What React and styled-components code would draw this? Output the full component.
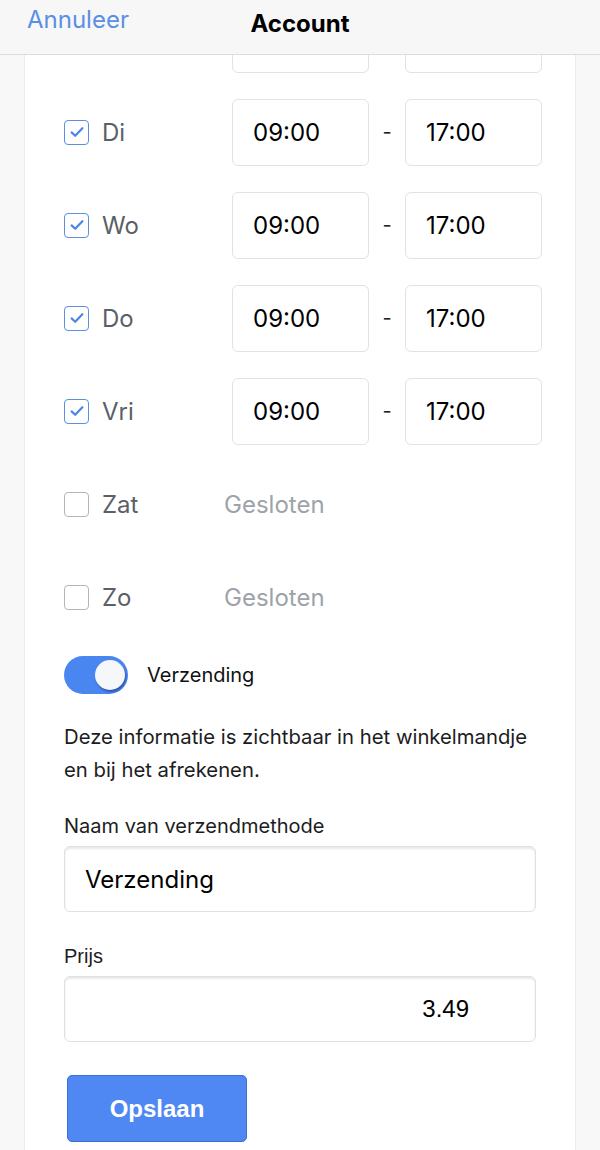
import React, { useState } from "react";
import styled, { createGlobalStyle } from "styled-components";

const GlobalStyle = createGlobalStyle`
  html, body {
    margin: 0;
    padding: 0;
    background: #f8f8f9;
    font-family: Inter, "Liberation Sans", sans-serif;
  }
  * { box-sizing: border-box; }
`;

const days = [
  { name: "Ma", open: true },
  { name: "Di", open: true },
  { name: "Wo", open: true },
  { name: "Do", open: true },
  { name: "Vri", open: true },
  { name: "Zat", open: false },
  { name: "Zo", open: false },
];

function Check({ checked }) {
  return (
    <Box checked={checked}>
      {checked && (
        <svg width="18" height="18" viewBox="0 0 18 18">
          <path
            d="M3.6 9.4 L7.2 12.8 L14.4 5.2"
            fill="none"
            stroke="#4a86e8"
            strokeWidth="2.2"
            strokeLinecap="round"
            strokeLinejoin="round"
          />
        </svg>
      )}
    </Box>
  );
}

function App() {
  const [shipping, setShipping] = useState(true);
  return (
    <>
      <GlobalStyle />
      <Header>
        <Cancel>Annuleer</Cancel>
        <Title>Account</Title>
      </Header>
      <Card>
        <Schedule>
          {days.map((day) => (
            <DayRow key={day.name}>
              <DayLabel>
                <Check checked={day.open} />
                <DayName>{day.name}</DayName>
              </DayLabel>
              {day.open ? (
                <>
                  <TimeInput defaultValue="09:00" />
                  <Dash>-</Dash>
                  <TimeInput defaultValue="17:00" />
                </>
              ) : (
                <Closed>Gesloten</Closed>
              )}
            </DayRow>
          ))}
        </Schedule>

        <ToggleRow>
          <Toggle on={shipping} onClick={() => setShipping(!shipping)}>
            <Knob on={shipping} />
          </Toggle>
          <ToggleLabel>Verzending</ToggleLabel>
        </ToggleRow>

        <Info>
          Deze informatie is zichtbaar in het winkelmandje en bij het
          afrekenen.
        </Info>

        <Field space={28}>
          <FieldLabel>Naam van verzendmethode</FieldLabel>
          <TextInput defaultValue="Verzending" />
        </Field>

        <Field space={33}>
          <FieldLabel arial>Prijs</FieldLabel>
          <TextInput price defaultValue="3.49" />
        </Field>

        <SaveButton>Opslaan</SaveButton>
      </Card>
    </>
  );
}

const Header = styled.header`
  position: fixed;
  top: 0;
  left: 0;
  right: 0;
  height: 55px;
  display: flex;
  align-items: center;
  justify-content: center;
  background: #f7f7f8;
  border-bottom: 1px solid #dcdcdc;
  z-index: 10;
`;

const Cancel = styled.span`
  position: absolute;
  left: 27px;
  top: 5px;
  font-size: 24px;
  color: #5a8fe3;
`;

const Title = styled.h1`
  margin: 0;
  margin-top: -8px;
  font-size: 24px;
  font-weight: 700;
  color: #000;
`;

const Card = styled.main`
  width: 552px;
  margin: 0 24px;
  min-height: 1150px;
  background: #fff;
  border-left: 1px solid #ececec;
  border-right: 1px solid #ececec;
  padding: 6px 0 0 39px;
`;

const Schedule = styled.div`
  display: flex;
  flex-direction: column;
  gap: 27px;
`;

const DayRow = styled.div`
  display: flex;
  align-items: center;
  height: 66px;
`;

const DayLabel = styled.div`
  width: 168px;
  display: flex;
  align-items: center;
  gap: 13px;
`;

const Box = styled.span`
  width: 25px;
  height: 25px;
  border-radius: 4px;
  border: 1.5px solid ${(p) => (p.checked ? "#5a8fe3" : "#b5b5b8")};
  background: #fff;
  display: flex;
  align-items: center;
  justify-content: center;
`;

const DayName = styled.span`
  font-size: 24px;
  color: #5b5f66;
`;

const TimeInput = styled.input`
  width: 137px;
  height: 67px;
  border: 1.5px solid #e2e2e4;
  border-radius: 6px;
  padding: 0 0 0 20px;
  font-family: Inter, "Liberation Sans", sans-serif;
  font-size: 24px;
  color: #000;
  background: #fff;
  outline: none;
`;

const Dash = styled.span`
  width: 36px;
  text-align: center;
  font-size: 20px;
  color: #222;
`;

const Closed = styled.span`
  margin-left: -8px;
  font-size: 24px;
  color: #9ea3aa;
`;

const ToggleRow = styled.div`
  display: flex;
  align-items: center;
  gap: 19px;
  margin-top: 26px;
`;

const Toggle = styled.button`
  width: 64px;
  height: 38px;
  border-radius: 19px;
  border: none;
  padding: 0 3px;
  background: ${(p) => (p.on ? "#4a86f0" : "#d4d4d8")};
  display: flex;
  align-items: center;
  justify-content: ${(p) => (p.on ? "flex-end" : "flex-start")};
  cursor: pointer;
`;

const Knob = styled.span`
  width: 30px;
  height: 30px;
  border-radius: 50%;
  background: #f6f7f9;
  box-shadow: 1px 2px 2px rgba(20, 50, 120, 0.55);
`;

const ToggleLabel = styled.span`
  font-size: 20px;
  color: #111;
`;

const Info = styled.p`
  margin: 26px 0 0;
  width: 490px;
  font-size: 20.3px;
  line-height: 33px;
  color: #1c1c1e;
`;

const Field = styled.div`
  margin-top: ${(p) => p.space}px;
  display: flex;
  flex-direction: column;
  gap: 8px;
`;

const FieldLabel = styled.label`
  font-size: 20px;
  color: #1c1c1e;
  font-family: ${(p) =>
    p.arial ? '"Liberation Sans", Arial, sans-serif' : 'Inter, "Liberation Sans", sans-serif'};
`;

const TextInput = styled.input`
  width: 472px;
  height: 66px;
  border: 1.5px solid #e0e0e3;
  border-radius: 6px;
  box-shadow: inset 0 2px 2px rgba(0, 0, 0, 0.09);
  padding: ${(p) => (p.price ? "0 66px 0 20px" : "0 20px")};
  text-align: ${(p) => (p.price ? "right" : "left")};
  font-family: ${(p) =>
    p.price ? '"Liberation Sans", Arial, sans-serif' : 'Inter, "Liberation Sans", sans-serif'};
  font-size: 24px;
  color: #000;
  background: #fff;
  outline: none;
`;

const SaveButton = styled.button`
  margin: 33px 0 0 3px;
  width: 180px;
  height: 67px;
  border-radius: 5px;
  border: 1.5px solid #3c6fcf;
  background: #4f88f3;
  color: #fff;
  font-family: "Liberation Sans", Arial, sans-serif;
  font-weight: 700;
  font-size: 24px;
  cursor: pointer;
`;

export default App;
